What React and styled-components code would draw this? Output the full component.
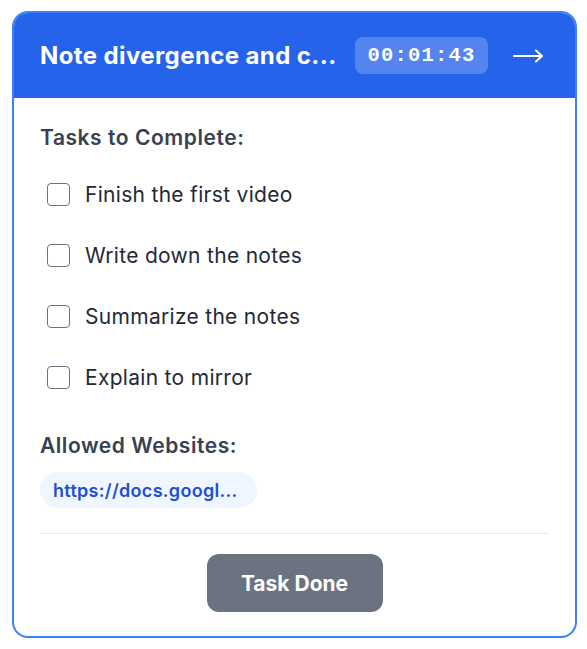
import React from "react";
import styled, { createGlobalStyle } from "styled-components";

const Global = createGlobalStyle`
  html, body { margin: 0; padding: 0; background: #ffffff; }
  body { font-family: Inter, "Noto Sans", "Liberation Sans", sans-serif; -webkit-font-smoothing: antialiased; }
  * { box-sizing: border-box; }
`;

const Page = styled.div`
  padding: 11px 10px 11px 12px;
`;

const Card = styled.div`
  border: 2px solid #3b82f6;
  border-radius: 16px;
  overflow: hidden;
  background: #ffffff;
`;

const Header = styled.div`
  height: 85px;
  background: #2563eb;
  display: flex;
  align-items: center;
  padding: 0 32px 0 26px;
  color: #ffffff;
`;

const Title = styled.h1`
  flex: 1;
  min-width: 0;
  margin: 0;
  font-size: 24px;
  font-weight: 700;
  letter-spacing: 0.4px;
  line-height: 30px;
  white-space: nowrap;
  overflow: hidden;
`;

const Timer = styled.div`
  height: 37px;
  width: 133px;
  display: flex;
  align-items: center;
  justify-content: center;
  border-radius: 8px;
  background: rgba(255, 255, 255, 0.22);
  font-family: "Liberation Mono", "DejaVu Sans Mono", monospace;
  font-weight: 700;
  font-size: 20.5px;
  letter-spacing: 1.2px;
  margin-right: 25px;
`;

const Arrow = styled.svg`
  width: 30px;
  height: 14px;
  display: block;
`;

const Body = styled.div`
  padding: 26px 26px 24px 26px;
  display: flex;
  flex-direction: column;
`;

const SectionTitle = styled.h2`
  margin: ${(p) => p.$top || 0}px 0 0 0;
  font-size: 21px;
  font-weight: 600;
  letter-spacing: 0.55px;
  line-height: 28px;
  color: #374151;
`;

const TaskList = styled.div`
  margin-top: 22px;
  display: flex;
  flex-direction: column;
  gap: 21px;
`;

const TaskRow = styled.label`
  height: 40px;
  display: flex;
  align-items: center;
  gap: 15px;
  padding-left: 7px;
  font-size: 21px;
  letter-spacing: 0.3px;
  color: #1f2937;
`;

const Box = styled.span`
  width: 23px;
  height: 23px;
  border: 1.5px solid #6b7280;
  border-radius: 4px;
  background: #fff;
  flex-shrink: 0;
`;

const Sites = styled.div`
  margin-top: 12px;
  display: flex;
`;

const Pill = styled.span`
  height: 36px;
  width: 217px;
  padding: 0 13px;
  border-radius: 18px;
  background: #eff6ff;
  color: #1d4ed8;
  font-size: 18px;
  font-weight: 600;
  letter-spacing: 0.3px;
  display: flex;
  align-items: center;
  white-space: nowrap;
`;

const Divider = styled.hr`
  margin: 25px 0 0 0;
  border: none;
  border-top: 1px solid #e5e7eb;
`;

const Footer = styled.div`
  margin-top: 20px;
  display: flex;
  justify-content: center;
`;

const DoneButton = styled.button`
  width: 176px;
  height: 58px;
  border: none;
  border-radius: 12px;
  background: #6b7280;
  color: #ffffff;
  font-family: inherit;
  font-size: 21px;
  font-weight: 700;
`;

const tasks = [
  "Finish the first video",
  "Write down the notes",
  "Summarize the notes",
  "Explain to mirror",
];

export default function App() {
  return (
    <Page>
      <Global />
      <Card>
        <Header>
          <Title>Note divergence and c...</Title>
          <Timer>00:01:43</Timer>
          <Arrow viewBox="0 0 30 14" fill="none" stroke="#ffffff" strokeWidth="2" strokeLinecap="round" strokeLinejoin="round">
            <path d="M1 7H29" />
            <path d="M23 1.5L29 7L23 12.5" />
          </Arrow>
        </Header>
        <Body>
          <SectionTitle>Tasks to Complete:</SectionTitle>
          <TaskList>
            {tasks.map((t) => (
              <TaskRow key={t}>
                <Box />
                {t}
              </TaskRow>
            ))}
          </TaskList>
          <SectionTitle $top={35}>Allowed Websites:</SectionTitle>
          <Sites>
            <Pill>https://docs.googl...</Pill>
          </Sites>
          <Divider />
          <Footer>
            <DoneButton>Task Done</DoneButton>
          </Footer>
        </Body>
      </Card>
    </Page>
  );
}
